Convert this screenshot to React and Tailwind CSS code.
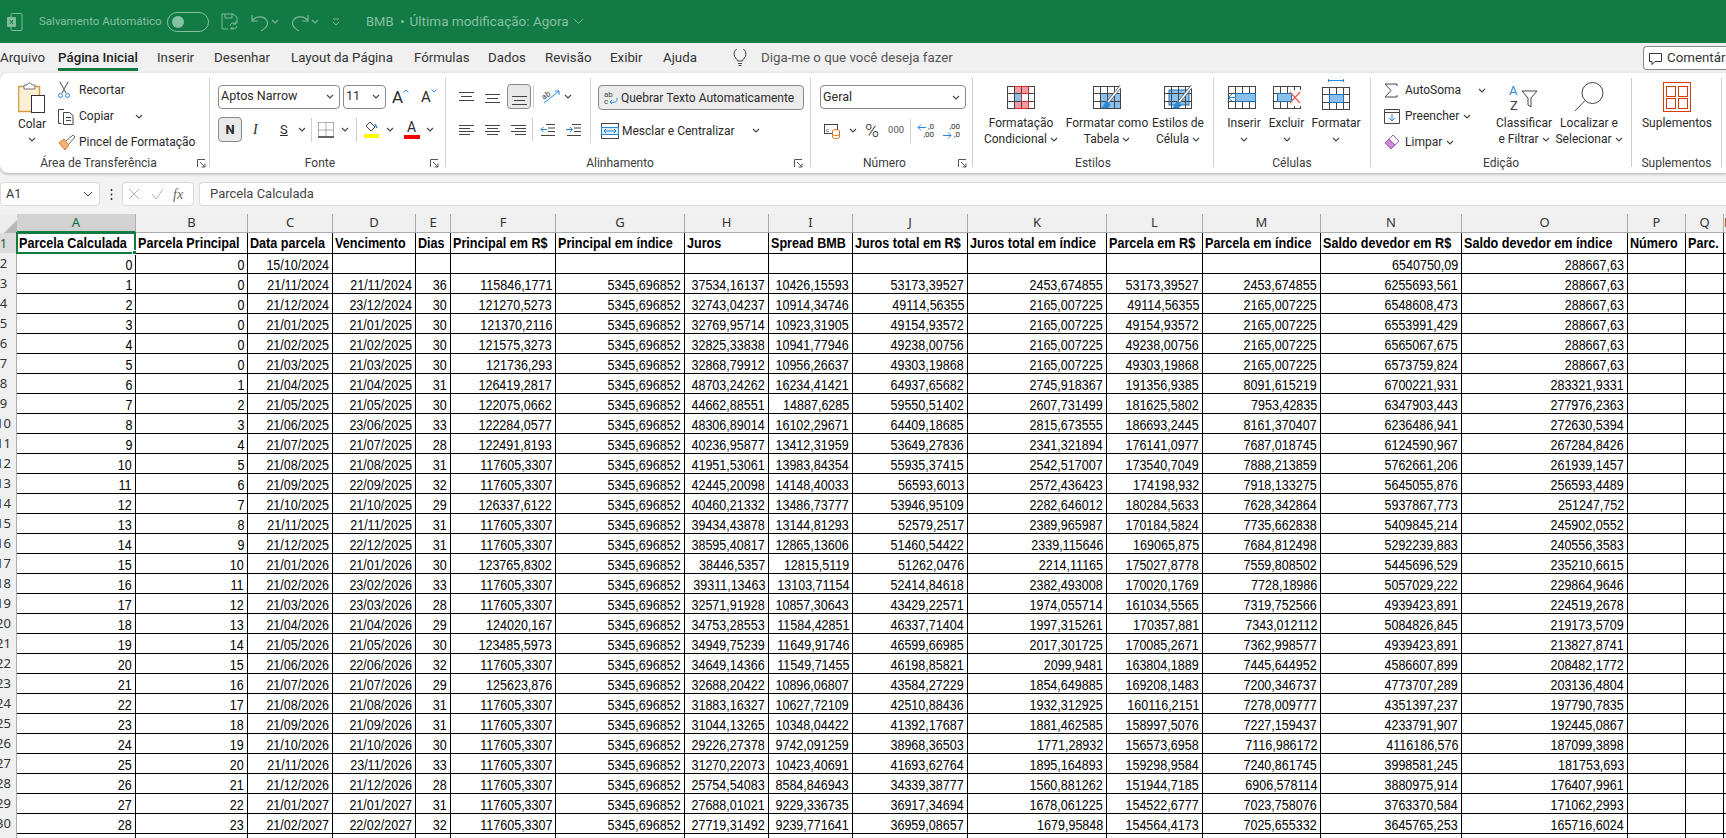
import React from "react";

const RAW = `1 0 21/11/2024 21/11/2024 36 115846,1771 37534,16137 10426,15593 53173,39527 2453,674855 53173,39527 2453,674855 6255693,561 288667,63
2 0 21/12/2024 23/12/2024 30 121270,5273 32743,04237 10914,34746 49114,56355 2165,007225 49114,56355 2165,007225 6548608,473 288667,63
3 0 21/01/2025 21/01/2025 30 121370,2116 32769,95714 10923,31905 49154,93572 2165,007225 49154,93572 2165,007225 6553991,429 288667,63
4 0 21/02/2025 21/02/2025 30 121575,3273 32825,33838 10941,77946 49238,00756 2165,007225 49238,00756 2165,007225 6565067,675 288667,63
5 0 21/03/2025 21/03/2025 30 121736,293 32868,79912 10956,26637 49303,19868 2165,007225 49303,19868 2165,007225 6573759,824 288667,63
6 1 21/04/2025 21/04/2025 31 126419,2817 48703,24262 16234,41421 64937,65682 2745,918367 191356,9385 8091,615219 6700221,931 283321,9331
7 2 21/05/2025 21/05/2025 30 122075,0662 44662,88551 14887,6285 59550,51402 2607,731499 181625,5802 7953,42835 6347903,443 277976,2363
8 3 21/06/2025 23/06/2025 33 122284,0577 48306,89014 16102,29671 64409,18685 2815,673555 186693,2445 8161,370407 6236486,941 272630,5394
9 4 21/07/2025 21/07/2025 28 122491,8193 40236,95877 13412,31959 53649,27836 2341,321894 176141,0977 7687,018745 6124590,967 267284,8426
10 5 21/08/2025 21/08/2025 31 117605,3307 41951,53061 13983,84354 55935,37415 2542,517007 173540,7049 7888,213859 5762661,206 261939,1457
11 6 21/09/2025 22/09/2025 32 117605,3307 42445,20098 14148,40033 56593,6013 2572,436423 174198,932 7918,133275 5645055,876 256593,4489
12 7 21/10/2025 21/10/2025 29 126337,6122 40460,21332 13486,73777 53946,95109 2282,646012 180284,5633 7628,342864 5937867,773 251247,752
13 8 21/11/2025 21/11/2025 31 117605,3307 39434,43878 13144,81293 52579,2517 2389,965987 170184,5824 7735,662838 5409845,214 245902,0552
14 9 21/12/2025 22/12/2025 31 117605,3307 38595,40817 12865,13606 51460,54422 2339,115646 169065,875 7684,812498 5292239,883 240556,3583
15 10 21/01/2026 21/01/2026 30 123765,8302 38446,5357 12815,5119 51262,0476 2214,11165 175027,8778 7559,808502 5445696,529 235210,6615
16 11 21/02/2026 23/02/2026 33 117605,3307 39311,13463 13103,71154 52414,84618 2382,493008 170020,1769 7728,18986 5057029,222 229864,9646
17 12 21/03/2026 23/03/2026 28 117605,3307 32571,91928 10857,30643 43429,22571 1974,055714 161034,5565 7319,752566 4939423,891 224519,2678
18 13 21/04/2026 21/04/2026 29 124020,167 34753,28553 11584,42851 46337,71404 1997,315261 170357,881 7343,012112 5084826,845 219173,5709
19 14 21/05/2026 21/05/2026 30 123485,5973 34949,75239 11649,91746 46599,66985 2017,301725 170085,2671 7362,998577 4939423,891 213827,8741
20 15 21/06/2026 22/06/2026 32 117605,3307 34649,14366 11549,71455 46198,85821 2099,9481 163804,1889 7445,644952 4586607,899 208482,1772
21 16 21/07/2026 21/07/2026 29 125623,876 32688,20422 10896,06807 43584,27229 1854,649885 169208,1483 7200,346737 4773707,289 203136,4804
22 17 21/08/2026 21/08/2026 31 117605,3307 31883,16327 10627,72109 42510,88436 1932,312925 160116,2151 7278,009777 4351397,237 197790,7835
23 18 21/09/2026 21/09/2026 31 117605,3307 31044,13265 10348,04422 41392,17687 1881,462585 158997,5076 7227,159437 4233791,907 192445,0867
24 19 21/10/2026 21/10/2026 30 117605,3307 29226,27378 9742,091259 38968,36503 1771,28932 156573,6958 7116,986172 4116186,576 187099,3898
25 20 21/11/2026 23/11/2026 33 117605,3307 31270,22073 10423,40691 41693,62764 1895,164893 159298,9584 7240,861745 3998581,245 181753,693
26 21 21/12/2026 21/12/2026 28 117605,3307 25754,54083 8584,846943 34339,38777 1560,881262 151944,7185 6906,578114 3880975,914 176407,9961
27 22 21/01/2027 21/01/2027 31 117605,3307 27688,01021 9229,336735 36917,34694 1678,061225 154522,6777 7023,758076 3763370,584 171062,2993
28 23 21/02/2027 22/02/2027 32 117605,3307 27719,31492 9239,771641 36959,08657 1679,95848 154564,4173 7025,655332 3645765,253 165716,6024`;

const G = "5345,696852";
const DATA = [
  ["0", "0", "15/10/2024", "", "", "", "", "", "", "", "", "", "", "6540750,09", "288667,63", "", "", ""],
  ...RAW.split("\n").map((l) => {
    const p = l.trim().split(" ");
    return [...p.slice(0, 6), G, ...p.slice(6), "", "", ""];
  }),
  Array(18).fill(""),
];
const HEAD = ["Parcela Calculada", "Parcela Principal", "Data parcela", "Vencimento", "Dias", "Principal em R$", "Principal em índice", "Juros", "Spread BMB", "Juros total em R$", "Juros total em índice", "Parcela em R$", "Parcela em índice", "Saldo devedor em R$", "Saldo devedor em índice", "Número", "Parc.", ""];
const LETTERS = "ABCDEFGHIJKLMNOPQR".split("");

const Chev = ({ c = "#444" }) => (
  <svg width="8" height="5" viewBox="0 0 8 5" className="shrink-0"><path d="M1 1l3 3 3-3" fill="none" stroke={c} strokeWidth="1.1" /></svg>
);
const Launcher = () => (
  <svg width="9" height="9" viewBox="0 0 9 9" className="shrink-0"><path d="M.5 8V.5H8M3 3l5 5M8 4.500V8H4.500" fill="none" stroke="#555" strokeWidth="1" /></svg>
);
const Lines = ({ rows, c = "#444" }) => (
  <svg width="15" height="16" viewBox="0 0 15 16">{rows.map(([x1, x2, y], i) => <path key={i} d={`M${x1} ${y}.5H${x2}`} stroke={c} strokeWidth="1" />)}</svg>
);

const Group = ({ w, label, labelW, launcher, sep = true, children }) => (
  <div className={`${w} h-[89px] my-[5px] shrink-0 flex flex-col ${sep ? "border-r border-[#cfcfcf]" : ""}`}>
    <div className="h-[77px] shrink-0 flex">{children}</div>
    <div className="h-[16px] shrink-0 flex items-center leading-[16px] text-[#3c3c3c]">
      <div className={`${labelW} text-center whitespace-nowrap`}>{label}</div>
      {launcher && <Launcher />}
    </div>
  </div>
);

const SmallBtn = ({ icon, text, chev, iconW = "w-[21px]", gap }) => (
  <div className="h-[24px] flex items-center whitespace-nowrap">
    <div className={`${iconW} flex justify-start`}>{icon}</div>
    <span>{text}</span>
    {chev && <div className={gap}><Chev /></div>}
  </div>
);

const BigBtn = ({ w, icon, l1, l2, chev2 }) => (
  <div className={`${w} shrink-0 flex flex-col items-center`}>
    <div className="h-[30px] mt-[4px] flex items-center justify-center">{icon}</div>
    <div className="mt-[3px] h-[16px] leading-[16px] whitespace-nowrap">{l1}</div>
    <div className="h-[16px] leading-[16px] whitespace-nowrap flex items-center gap-[3px]">
      {l2 && <span>{l2}</span>}
      {chev2 && <Chev />}
    </div>
  </div>
);

const GridIcon = ({ children, w = 28, h = 24 }) => (
  <svg width={w} height={h} viewBox={`0 0 ${w} ${h}`} fill="none">{children}</svg>
);
const TableLines = () => (
  <g stroke="#444" strokeWidth="1" fill="none">
    <rect x=".5" y="1.500" width="27" height="22" />
    <path d="M.5 8.500h27M.5 16.500h27M7.500 1.500v22M14.500 1.500v22M21.500 1.500v22" />
  </g>
);

function Title() {
  const f = "#7dbb9b";
  return (
    <div className="h-[43px] bg-[#117a45] flex items-center text-[12px] shrink-0 text-[#86c0a3]">
      <svg width="16" height="18" viewBox="0 0 16 18" className="ml-[7px]"><rect x="4" y=".5" width="11" height="17" rx="1" fill="none" stroke={f} /><rect x="0" y="4" width="9" height="10" rx="1" fill={f} /><path d="M3 7l3 4M6 7l-3 4" stroke="#117a45" /></svg>
      <span className="ml-[16px] w-[121px] text-[11.5px] whitespace-nowrap">Salvamento Automático</span>
      <div className="ml-[7px] w-[42px] h-[20px] rounded-full border border-[#86c0a3] flex items-center pl-[4px]"><div className="w-[12px] h-[12px] rounded-full bg-[#86c0a3]" /></div>
      <svg width="17" height="17" viewBox="0 0 17 17" fill="none" stroke={f} className="ml-[12px]"><path d="M1 1h11l4 3v6M1 1v15h6M4 1v4h7V1" /><path d="M9 13a3.500 3.500 0 016-2M16 13a3.500 3.500 0 01-6 2M15 8v3h-3M10 18v-3h3" /></svg>
      <svg width="19" height="18" viewBox="0 0 19 18" fill="none" stroke={f} strokeWidth="1.1" className="ml-[13px]"><path d="M1 2v6h6M1 8c3-5 12-6 15 0 2 4-1 7-6 10" /></svg>
      <div className="ml-[1px]"><Chev c={f} /></div>
      <svg width="19" height="18" viewBox="0 0 19 18" fill="none" stroke={f} strokeWidth="1.1" className="ml-[11px]"><path d="M18 2v6h-6M18 8c-3-5-12-6-15 0-2 4 1 7 6 10" /></svg>
      <div className="ml-[2px]"><Chev c={f} /></div>
      <svg width="8" height="8" viewBox="0 0 8 8" fill="none" stroke={f} className="ml-[13px]"><path d="M1 1h6M1 4l3 3 3-3" /></svg>
      <span className="ml-[26px] text-[13px] whitespace-nowrap">BMB</span>
      <span className="ml-[7px] w-[3px] h-[3px] bg-[#86c0a3] rounded-full" />
      <span className="ml-[6px] text-[13.5px] whitespace-nowrap">Última modificação: Agora</span>
      <div className="ml-[4px]"><svg width="11" height="7" viewBox="0 0 11 7"><path d="M1 1l4.500 4.500L10 1" fill="none" stroke={f} /></svg></div>
    </div>
  );
}

function Tabs() {
  const t = [["Inserir", "w-[57px]"], ["Desenhar", "w-[77px]"], ["Layout da Página", "w-[123px]"], ["Fórmulas", "w-[74px]"], ["Dados", "w-[57px]"], ["Revisão", "w-[65px]"], ["Exibir", "w-[53px]"], ["Ajuda", "w-[70px]"]];
  return (
    <div className="h-[30px] bg-[#f0f0f0] flex items-center text-[13.3px] text-[#333] shrink-0 relative">
      <span className="w-[58px] whitespace-nowrap">Arquivo</span>
      <div className="h-full w-[80px] mr-[19px] flex flex-col items-center">
        <span className="leading-[30px] font-medium text-[#222] whitespace-nowrap">Página Inicial</span>
        <div className="h-[3px] w-full shrink-0 bg-[#107c41] -mt-[5px]" />
      </div>
      {t.map(([s, c]) => <span key={s} className={`${c} whitespace-nowrap`}>{s}</span>)}
      <svg width="14" height="18" viewBox="0 0 14 18" fill="none" stroke="#444"><path d="M4.500 12c0-2-3.500-3.500-3.500-7a6 6 0 0112 0c0 3.500-3.500 5-3.500 7zM5 14.500h4M5.500 16.500h3" /></svg>
      <span className="ml-[14px] text-[#555] whitespace-nowrap">Diga-me o que você deseja fazer</span>
      <div className="ml-auto w-[83px] h-[24px] bg-white border border-[#8a8a8a] rounded-l-[4px] flex items-center border-r-0 overflow-hidden">
        <svg width="13" height="13" viewBox="0 0 13 13" fill="none" stroke="#333" className="ml-[5px] shrink-0"><path d="M.5 1.500h12v8H6l-3 3v-3H.5z" /></svg>
        <span className="ml-[5px] whitespace-nowrap">Comentários</span>
      </div>
    </div>
  );
}

function Ribbon() {
  return (
    <div className="h-[100px] bg-white rounded-l-[8px] shadow-[0_1px_3px_rgba(0,0,0,0.3)] flex text-[12px] text-[#2b2b2b] shrink-0 relative">
      <Group w="w-[210px]" label="Área de Transferência" labelW="w-[197px]" launcher>
        <div className="w-[58px] pl-[6px] flex flex-col items-center shrink-0">
          <svg width="28" height="31" viewBox="0 0 28 31" className="mt-[4px]"><rect x=".5" y="4.500" width="21" height="25" fill="#fdf0d5" stroke="#d59a45" strokeWidth="1.500" /><path d="M6 7V3h3l1.500-2h2L14 3h3v4z" fill="#fff" stroke="#777" /><rect x="13.500" y="13.500" width="13" height="17" fill="#fff" stroke="#333" /></svg>
          <div className="mt-[3px] h-[16px] leading-[16px]">Colar</div>
          <div className="mt-[5px]"><Chev /></div>
        </div>
        <div className="flex flex-col gap-[2px]">
          <SmallBtn text="Recortar" icon={<svg width="12" height="18" viewBox="0 0 12 18" fill="none"><path d="M2 1l6 11M10 1L4 12" stroke="#666" strokeWidth="1.100" /><circle cx="2.500" cy="14.500" r="2" stroke="#2b88d8" /><circle cx="9.500" cy="14.500" r="2" stroke="#2b88d8" /></svg>} />
          <SmallBtn text="Copiar" chev gap="ml-[21px]" icon={<svg width="16" height="17" viewBox="0 0 16 17" fill="none" stroke="#444"><path d="M3.500 15.500h-3V1.500H6M5.500 4.500h6l3.500 3v9h-9.500zM8 9.500h5M8 12.500h5" /></svg>} />
          <SmallBtn text="Pincel de Formatação" icon={<svg width="18" height="17" viewBox="0 0 18 17" fill="none"><path d="M1 9l6 7 4-5-5-6z" fill="#f2b279" stroke="#d8791f" /><path d="M8 7l7-6 2 2-6 7" fill="#fff" stroke="#666" /></svg>} />
        </div>
      </Group>

      <Group w="w-[236px]" label="Fonte" labelW="w-[220px]" launcher>
        <div className="flex flex-col pl-[8px] pt-[7px]">
          <div className="flex items-center h-[23px]">
            <div className="w-[122px] h-[24px] border border-[#8a8a8a] rounded-[4px] flex items-center justify-between px-[2px] pr-[5px]"><span className="text-[12.5px]">Aptos Narrow</span><Chev /></div>
            <div className="ml-[3px] w-[43px] h-[24px] border border-[#8a8a8a] rounded-[4px] flex items-center justify-between px-[2px] pr-[5px]"><span className="text-[12.5px]">11</span><Chev /></div>
            <div className="ml-[6px] flex items-start"><span className="text-[17px] leading-[20px]">A</span><svg width="6" height="4" viewBox="0 0 6 4" className="mt-[2px]"><path d="M.5 3.500L3 1l2.500 2.500" fill="none" stroke="#2b88d8" /></svg></div>
            <div className="ml-[12px] flex items-start"><span className="text-[15px] leading-[20px]">A</span><svg width="6" height="4" viewBox="0 0 6 4" className="mt-[2px]"><path d="M.5.5L3 3 5.500.5" fill="none" stroke="#2b88d8" /></svg></div>
          </div>
          <div className="flex items-center h-[25px] mt-[9px]">
            <div className="w-[24px] h-[25px] bg-[#e9e9e9] border border-[#8a8a8a] rounded-[4px] flex items-center justify-center font-bold text-[13px]">N</div>
            <span className="ml-[11px] w-[8px] text-[14px] italic" style={{ fontFamily: "'Liberation Serif', serif" }}>I</span>
            <span className="ml-[19px] w-[8px] text-[13px] underline">S</span>
            <div className="ml-[10px]"><Chev /></div>
            <div className="ml-[5px] w-px h-[24px] bg-[#d0d0d0]" />
            <svg width="16" height="16" viewBox="0 0 16 16" fill="none" className="ml-[6px]"><path d="M.5.500h15M.5 8h15M8 .500v14M.5.500v14M15.500.500v14" stroke="#666" strokeDasharray="1 1" /><path d="M0 15h16" stroke="#111" strokeWidth="1.300" /></svg>
            <div className="ml-[7px]"><Chev /></div>
            <div className="ml-[7px] w-px h-[24px] bg-[#d0d0d0]" />
            <div className="ml-[6px] flex flex-col items-center w-[16px]"><svg width="14" height="12" viewBox="0 0 14 12" fill="none"><path d="M6 1l5 5-4 4-5-5z" stroke="#444" /><path d="M11 3l2 4" stroke="#2b88d8" strokeWidth="1.500" /></svg><div className="w-[15px] h-[4px] bg-[#ffff00] mt-[1px]" /></div>
            <div className="ml-[7px]"><Chev /></div>
            <div className="ml-[9px] flex flex-col items-center w-[17px]"><span className="text-[14px] leading-[13px]">A</span><div className="w-[16px] h-[4px] bg-[#ff0000] mt-[1px]" /></div>
            <div className="ml-[6px]"><Chev /></div>
          </div>
        </div>
      </Group>

      <Group w="w-[365px]" label="Alinhamento" labelW="w-[348px]" launcher>
        <div className="flex flex-col pl-[13px] pt-[7px] w-[145px] shrink-0 border-r border-[#d5d5d5] h-[65px]">
          <div className="flex items-center h-[23px]">
            <Lines rows={[[0, 15, 3], [2, 13, 7], [0, 15, 11]]} />
            <div className="ml-[11px]"><Lines rows={[[0, 15, 5], [2, 13, 9], [0, 15, 13]]} /></div>
            <div className="ml-[7px] w-[24px] h-[25px] bg-[#e9e9e9] border border-[#8a8a8a] rounded-[4px] flex items-center justify-center"><Lines rows={[[0, 15, 7], [2, 13, 11], [0, 15, 15]]} /></div>
            <div className="ml-[2px] w-px h-[23px] bg-[#d0d0d0]" />
            <svg width="20" height="18" viewBox="0 0 20 18" fill="none" className="ml-[7px]"><path d="M3 15L18 3M14 3h4v4" stroke="#2b88d8" /><text x="1" y="10" fontSize="8" fill="#444" transform="rotate(-35 5 8)">ab</text></svg>
            <div className="ml-[3px]"><Chev /></div>
          </div>
          <div className="flex items-center h-[25px] mt-[9px]">
            <Lines rows={[[0, 15, 3], [0, 11, 6], [0, 15, 9], [0, 11, 12]]} />
            <div className="ml-[11px]"><Lines rows={[[0, 15, 3], [2, 13, 6], [0, 15, 9], [2, 13, 12]]} /></div>
            <div className="ml-[11px]"><Lines rows={[[0, 15, 3], [4, 15, 6], [0, 15, 9], [4, 15, 12]]} /></div>
            <div className="ml-[6px] w-px h-[23px] bg-[#d0d0d0]" />
            <svg width="16" height="14" viewBox="0 0 16 14" fill="none" className="ml-[7px]"><path d="M6 1.500h9M8 5h7M8 8.500h7M1 12.500h14" stroke="#444" /><path d="M1 6.500h6M3.500 4L1 6.500 3.500 9" stroke="#2b88d8" /></svg>
            <svg width="16" height="14" viewBox="0 0 16 14" fill="none" className="ml-[10px]"><path d="M6 1.500h9M8 5h7M8 8.500h7M1 12.500h14" stroke="#444" /><path d="M0 6.500h6M4 4l2.500 2.500L4 9" stroke="#2b88d8" /></svg>
          </div>
        </div>
        <div className="pl-[7px] pt-[7px] flex flex-col">
          <div className="w-[206px] h-[25px] bg-[#ececec] border border-[#8a8a8a] rounded-[4px] flex items-center pl-[5px] whitespace-nowrap">
            <svg width="14" height="15" viewBox="0 0 14 15" fill="none" className="mr-[3px]"><text x="0" y="7" fontSize="8" fill="#444">ab</text><text x="0" y="14" fontSize="8" fill="#444">c</text><path d="M13 8c1 4-3 5-6 4M8 10l-2 2 2 2" stroke="#2b88d8" /></svg>
            Quebrar Texto Automaticamente
          </div>
          <div className="flex items-center h-[25px] mt-[8px] pl-[3px] whitespace-nowrap">
            <svg width="18" height="16" viewBox="0 0 18 16" fill="none" className="mr-[3px]"><rect x=".5" y=".5" width="17" height="15" stroke="#444" /><path d="M.5 4.500h17M.5 11.500h17" stroke="#444" /><rect x=".5" y="4.500" width="17" height="7" stroke="#2b88d8" fill="#deecf9" /><path d="M3 8h12M5 6L3 8l2 2M13 6l2 2-2 2" stroke="#2b88d8" /></svg>
            Mesclar e Centralizar
            <div className="ml-[17px]"><Chev /></div>
          </div>
        </div>
      </Group>

      <Group w="w-[162px]" label="Número" labelW="w-[147px]" launcher>
        <div className="pl-[9px] pt-[7px] flex flex-col">
          <div className="w-[146px] h-[24px] border border-[#8a8a8a] rounded-[4px] flex items-center justify-between px-[2px] pr-[5px]"><span className="text-[12.5px]">Geral</span><Chev /></div>
          <div className="flex items-center h-[25px] mt-[9px]">
            <svg width="18" height="16" viewBox="0 0 18 16" fill="none" className="ml-[4px] shrink-0"><rect x=".5" y="1.500" width="13" height="9" stroke="#444" /><text x="2" y="8.500" fontSize="6" fill="#444">c</text><ellipse cx="12" cy="8" rx="3.500" ry="1.500" stroke="#d8791f" fill="#fff" /><path d="M8.500 8v6c0 2 7 2 7 0V8M8.500 11c0 2 7 2 7 0" stroke="#d8791f" fill="#fff" /></svg>
            <div className="ml-[7px]"><Chev /></div>
            <span className="ml-[8px] text-[19px] leading-[20px] font-light">%</span>
            <span className="ml-[9px] text-[9.5px] text-[#555]">000</span>
            <div className="ml-[6px] w-px h-[24px] bg-[#d0d0d0]" />
            <div className="ml-[6px] w-[17px] relative text-[8px] leading-[8px] text-right">
              <div>,0</div><div>,00</div>
              <svg width="9" height="7" viewBox="0 0 9 7" className="absolute left-0 top-[1px]"><path d="M9 3.500H1M4 .500L1 3.500l3 3" fill="none" stroke="#2b88d8" /></svg>
            </div>
            <div className="ml-[9px] w-[17px] relative text-[8px] leading-[8px] text-right">
              <div>,00</div><div>,0</div>
              <svg width="9" height="7" viewBox="0 0 9 7" className="absolute left-0 top-[9px]"><path d="M0 3.500h8M5 .500l3 3-3 3" fill="none" stroke="#2b88d8" /></svg>
            </div>
          </div>
        </div>
      </Group>

      <Group w="w-[241px]" label="Estilos" labelW="w-[241px]">
        <div className="w-[4px] shrink-0" />
        <BigBtn w="w-[88px]" l1="Formatação" l2="Condicional" chev2 icon={<GridIcon><rect x="7" y="2" width="14" height="6" fill="#f59aa3" /><rect x="7" y="9" width="7" height="7" fill="#8cc0ec" /><rect x="7" y="16" width="14" height="7" fill="#f59aa3" /><TableLines /><path d="M7.500 1.500h14v7h-7v8h7v7h-14" stroke="#e02b2b" /></GridIcon>} />
        <BigBtn w="w-[84px]" l1="Formatar como" l2="Tabela" chev2 icon={<GridIcon><rect x="8" y="8" width="20" height="16" fill="#8cc0ec" /><TableLines /><path d="M28 1L15 17" stroke="#666" strokeWidth="3" /><path d="M28 1L15 17" stroke="#fff" strokeWidth="1.500" /><path d="M14 16c-3 1-3 5-6 7 6 1 10-1 9-4z" fill="#2b88d8" /></GridIcon>} />
        <BigBtn w="w-[58px]" l1="Estilos de" l2="Célula" chev2 icon={<GridIcon><rect x="5" y="5" width="20" height="15" fill="#8cc0ec" stroke="#1a73b8" /><TableLines /><path d="M28 1L15 17" stroke="#666" strokeWidth="3" /><path d="M28 1L15 17" stroke="#fff" strokeWidth="1.500" /><path d="M14 16c-3 1-3 5-6 7 6 1 10-1 9-4z" fill="#2b88d8" /></GridIcon>} />
      </Group>

      <Group w="w-[157px]" label="Células" labelW="w-[157px]">
        <div className="w-[8px] shrink-0" />
        <BigBtn w="w-[44px]" l1="Inserir" chev2 icon={<GridIcon w={32} h={24}><TableLines /><rect x="7.500" y="8.500" width="20" height="8" fill="#8cc0ec" stroke="#1a73b8" /><path d="M8 12.500H1M4 9l-3.500 3.500L4 16" stroke="#2b88d8" /></GridIcon>} />
        <BigBtn w="w-[41px]" l1="Excluir" chev2 icon={<GridIcon><TableLines /><rect x="4.500" y="8.500" width="14" height="8" fill="#8cc0ec" stroke="#1a73b8" /><rect x="19" y="5" width="9" height="16" fill="#fff" /><path d="M17 7l10 11M27 7L17 18" stroke="#e8605a" strokeWidth="1.300" /></GridIcon>} />
        <BigBtn w="w-[58px]" l1="Formatar" chev2 icon={<svg width="28" height="31" viewBox="0 0 28 31" fill="none" className="-mt-[6px]"><path d="M6 1.500h16M6.500 0v3M21.500 0v3" stroke="#2b88d8" /><g transform="translate(0 7)"><TableLines /><rect x="7.500" y="8.500" width="14" height="8" fill="#8cc0ec" stroke="#1a73b8" /></g></svg>} />
      </Group>

      <Group w="w-[261px]" label="Edição" labelW="w-[261px]">
        <div className="pl-[13px] flex flex-col gap-[2px] w-[123px] shrink-0">
          <div className="h-[24px] flex items-center whitespace-nowrap"><svg width="14" height="15" viewBox="0 0 14 15" fill="none" className="mr-[7px]"><path d="M13 3V1H1l6 6.500L1 14h12v-2" stroke="#444" /></svg>AutoSoma<div className="ml-[17px]"><Chev /></div></div>
          <div className="h-[24px] flex items-center whitespace-nowrap"><svg width="16" height="15" viewBox="0 0 16 15" fill="none" className="mr-[5px]"><path d="M.5 3.500h15M.5.500h15v14H.5z" stroke="#444" /><path d="M8 5v7M5 9l3 3 3-3" stroke="#2b88d8" /></svg>Preencher<div className="ml-[4px]"><Chev /></div></div>
          <div className="h-[24px] flex items-center whitespace-nowrap"><svg width="16" height="16" viewBox="0 0 16 16" fill="none" className="mr-[5px]"><path d="M1 9l8-8 6 6-8 8z" stroke="#a25ab5" /><path d="M1 9l4-4 6 6-4 4z" fill="#c98bd6" stroke="#a25ab5" /></svg>Limpar<div className="ml-[4px]"><Chev /></div></div>
        </div>
        <BigBtn w="w-[60px]" l1="Classificar" l2="e Filtrar" chev2 icon={<svg width="30" height="30" viewBox="0 0 30 30" fill="none"><text x="0" y="13" fontSize="13" fill="#2b88d8">A</text><text x="1" y="28" fontSize="13" fill="#444">Z</text><path d="M13 9h15l-6 7v9l-3-2v-7z" stroke="#444" /></svg>} />
        <BigBtn w="w-[70px]" l1="Localizar e" l2="Selecionar" chev2 icon={<svg width="30" height="30" viewBox="0 0 30 30" fill="none"><circle cx="18.500" cy="11" r="10.500" stroke="#444" /><path d="M11 18.500L1 29" stroke="#444" /></svg>} />
      </Group>

      <Group w="w-[90px]" label="Suplementos" labelW="w-[90px]">
        <BigBtn w="w-[90px]" l1="Suplementos" icon={<svg width="28" height="30" viewBox="0 0 28 30" fill="none" stroke="#d83b01"><rect x=".5" y=".5" width="27" height="29" /><rect x="3.500" y="4.500" width="9" height="10" /><rect x="15.500" y="4.500" width="9" height="10" /><rect x="3.500" y="16.500" width="9" height="10" /><rect x="15.500" y="16.500" width="9" height="10" /></svg>} />
      </Group>
    </div>
  );
}

function FormulaBar() {
  return (
    <div className="h-[24px] mt-[9px] flex items-stretch shrink-0">
      <div className="w-[100px] bg-white rounded-[4px] border border-[#dcdcdc] flex items-center justify-between pl-[5px] pr-[6px] text-[12.5px] text-[#333]">A1<svg width="10" height="6" viewBox="0 0 10 6"><path d="M1 1l4 4 4-4" fill="none" stroke="#444" /></svg></div>
      <div className="w-[22px] flex items-center justify-center"><svg width="3" height="11" viewBox="0 0 3 11"><path d="M1.500 0v2M1.500 4.500v2M1.500 9v2" stroke="#333" strokeWidth="1.500" /></svg></div>
      <div className="w-[72px] bg-white rounded-[4px] border border-[#dcdcdc] flex items-center pl-[5px]">
        <svg width="12" height="12" viewBox="0 0 12 12"><path d="M1 1l10 10M11 1L1 11" stroke="#b4b4b4" /></svg>
        <svg width="13" height="12" viewBox="0 0 13 12" className="ml-[11px]"><path d="M1 6l4 5 7-10" fill="none" stroke="#b4b4b4" /></svg>
        <span className="ml-[9px] text-[14px] italic text-[#666]" style={{ fontFamily: "'Liberation Serif', serif" }}>fx</span>
      </div>
      <div className="flex-1 ml-[5px] bg-white rounded-l-[4px] border border-r-0 border-[#dcdcdc] flex items-center pl-[10px] text-[13px] text-[#444]">Parcela Calculada</div>
    </div>
  );
}

function Sheet() {
  const narrow = { fontFamily: "'Liberation Sans', sans-serif" };
  return (
    <div className="mt-[8px] grid grid-cols-[17px_119px_112px_85px_83px_35px_105px_129px_84px_84px_115px_139px_96px_118px_141px_166px_58px_38px_1fr] auto-rows-[20px] overflow-hidden flex-1" style={{ fontFamily: "'Noto Sans', sans-serif" }}>
      <div className="h-[19px] bg-[#ededed] flex items-end justify-end"><svg width="13" height="13" viewBox="0 0 13 13"><path d="M13 0v13H0z" fill="#b8b8b8" /></svg></div>
      {LETTERS.map((l, i) => (
        <div key={l} className={`h-[19px] flex items-center justify-center text-[13px] border-b border-r ${i === 0 ? "bg-[#d2d2d2] text-[#0e6a3a] border-[#107c41] border-r-[#b0b0b0] border-b-2" : "bg-[#f0f0f0] text-[#333] border-[#ababab]"}`}>{l}</div>
      ))}
      <RowHead n={1} sel />
      {HEAD.map((h, i) => (
        <div key={i} className="-mt-[1px] h-[21px] relative border-r border-b border-black bg-white pl-[2px] flex items-center font-bold text-[15px] leading-[20px] whitespace-nowrap text-black" style={narrow}>
          <span className="inline-block origin-left scale-x-[0.84]">{h}</span>
          {i === 0 && <div className="absolute -left-px -top-px -right-px -bottom-px border-2 border-[#107c41]"><div className="absolute -right-[3px] -bottom-[3px] w-[5px] h-[5px] bg-[#107c41] border border-white" /></div>}
        </div>
      ))}
      {DATA.map((row, r) => (
        <React.Fragment key={r}>
          <RowHead n={r + 2} />
          {row.map((v, c) => (
            <div key={c} className="border-r border-b border-black bg-white pr-[3px] pt-px flex justify-end text-[15px] leading-[19px] whitespace-nowrap text-black" style={narrow}>
              {v && <span className="inline-block shrink-0 origin-right scale-x-[0.835]">{v}</span>}
            </div>
          ))}
        </React.Fragment>
      ))}
    </div>
  );
}

const RowHead = ({ n, sel }) => (
  <div className={`-mt-px h-[21px] border-r border-b border-[#ababab] overflow-hidden text-[13px] leading-[20px] ${sel ? "bg-[#dcdcdc] text-[#0e6a3a]" : "bg-[#f0f0f0] text-[#333]"}`}>
    <div className="-ml-[11px] w-[29px] text-center">{n}</div>
  </div>
);

export default function App() {
  return (
    <div className="w-[1726px] h-[838px] overflow-hidden bg-[#f2f2f2] flex flex-col" style={{ fontFamily: "Roboto, sans-serif" }}>
      <Title />
      <Tabs />
      <Ribbon />
      <FormulaBar />
      <Sheet />
    </div>
  );
}
